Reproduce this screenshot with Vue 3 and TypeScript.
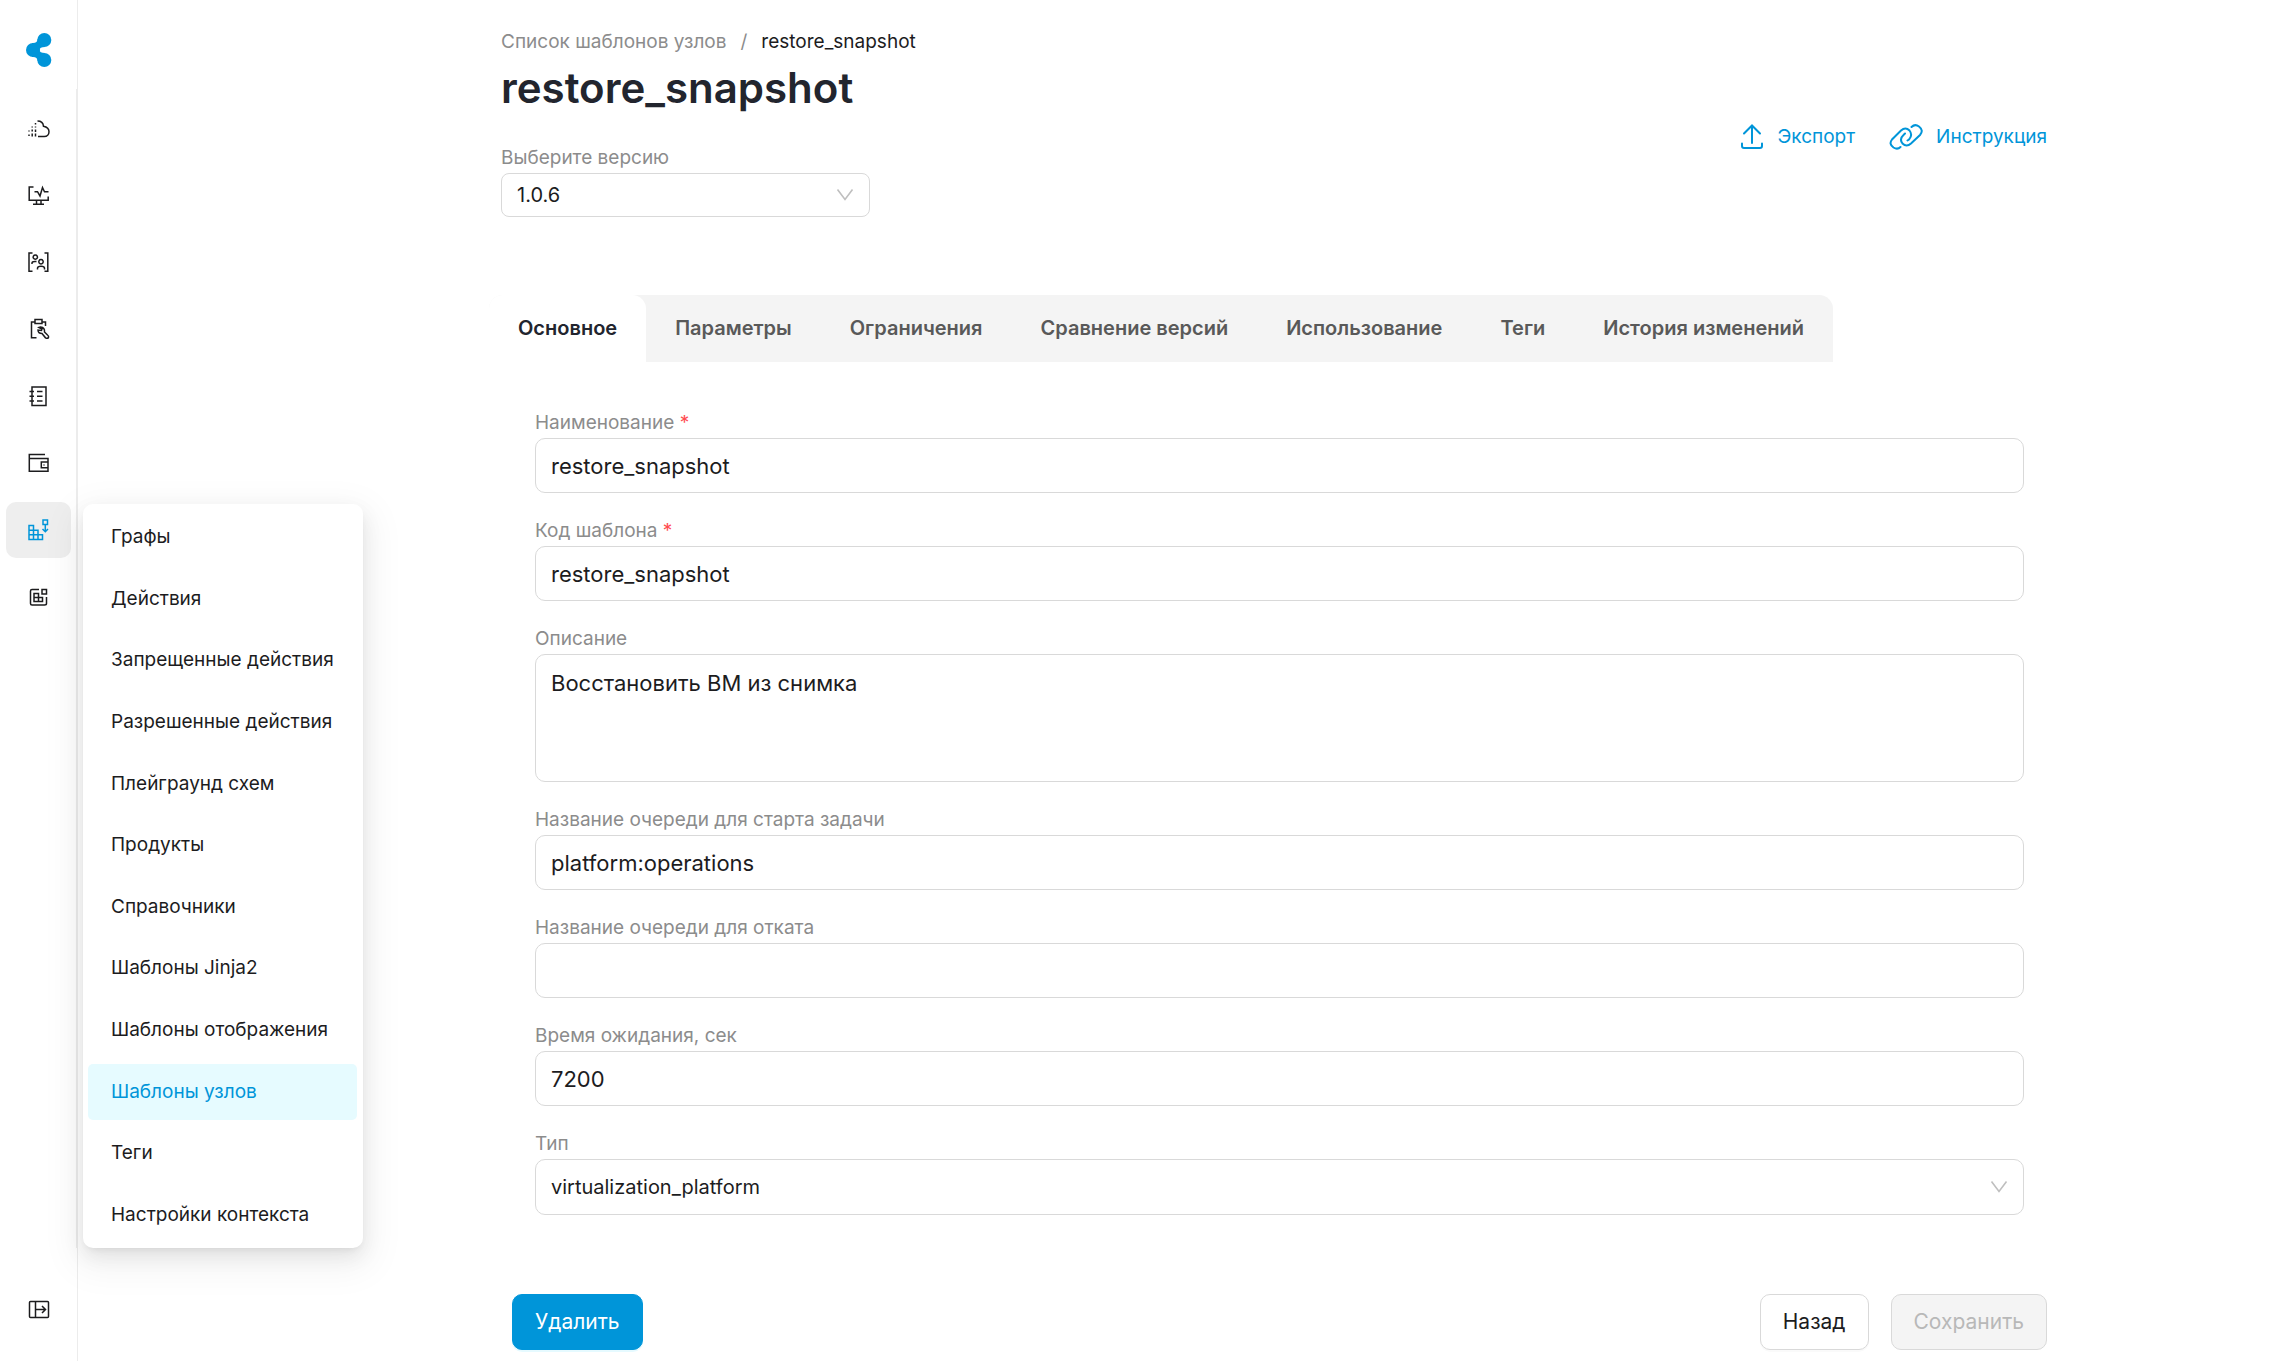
<script setup lang="ts">
import { ref } from 'vue'

interface NavItem {
  id: string
  title: string
  paths: string[]
}

const navItems: NavItem[] = [
  {
    id: 'cloud',
    title: 'Облако',
    paths: [
      'M10.5 5C14 5 16.2 7 16.5 10.3C20 11 22 13 22 15.8C22 18.6 20 20.5 17.3 20.5H11',
      'M8.5 7v1.5M8.5 10.5v1M8.5 13.5v2.5M8.5 17.5v3M5.2 10.5v1M5.2 13.5v2M5.2 17.5v3M2 14.5v1M2 18.5v1.5',
    ],
  },
  {
    id: 'monitoring',
    title: 'Мониторинг',
    paths: ['M6.5 4H2.2V17.2H21.2V13.5', 'M7.5 8.7H10.5L13 13L15.5 4.5L17.5 8.7H21.5', 'M9.5 17.5V21M14 17.5V21M6 21.2H17'],
  },
  {
    id: 'users',
    title: 'Пользователи',
    paths: [
      'M5.5 3H2V21.2H5.5M17.5 3H20.8V21.2H17.5',
      'M8.3 4.9a2.2 2.2 0 1 0 .01 0M5 14v-1q0-1.5 3-1.5h1.5',
      'M14 9.5a2.2 2.2 0 1 0 .01 0M10.5 19.5v-1.3q0-2 3.5-2t3.5 2v1.3',
    ],
  },
  {
    id: 'tasks',
    title: 'Задачи',
    paths: [
      'M9.5 20.8H4.5V5H8M15 5H18.5V9',
      'M8 2.5H15V6.5H8Z',
      'M12 10.5L15 12L14.5 13.5L11 13Q11 16.5 15 16.5L18.5 20.8Q20.5 22 21.5 20.5Q22 19 20.5 18L17.5 15Q18 10.5 13.5 10Z',
    ],
  },
  { id: 'journal', title: 'Журнал', paths: ['M5 3H19V21.5H5Z', 'M2.5 7.5H7M2.5 12.2H7M2.5 17H7M10 7.5H15.5M10 12.2H15.5M10 17H15.5'] },
  { id: 'wallet', title: 'Финансы', paths: ['M18 3.5H2.3V20.3H21V7.5H2.3', 'M21 11H14.3V16.8H21', 'M17 13.4V14.4'] },
  {
    id: 'designer',
    title: 'Конструктор',
    paths: ['M2 7.5H6.5V21.5H2ZM2 12.2H11V21.5M2 16.8H15.5V21.5H6.5', 'M16 2H20.5V6.5H16Z', 'M18.3 6.5V13.5M15.5 11L18.3 13.7L21 11'],
  },
  {
    id: 'blocks',
    title: 'Блоки',
    paths: ['M12 4.5H5Q3.5 4.5 3.5 6V18.5Q3.5 20 5 20H17.5Q19.5 20 19.5 18.5V12', 'M15 4.5H19.5V9H15Z', 'M7 8.5H11.5V16.5H7ZM7 12.5H15.5V16.5H11.5'],
  },
]

const activeNav = ref('designer')

const submenu: string[] = [
  'Графы',
  'Действия',
  'Запрещенные действия',
  'Разрешенные действия',
  'Плейграунд схем',
  'Продукты',
  'Справочники',
  'Шаблоны Jinja2',
  'Шаблоны отображения',
  'Шаблоны узлов',
  'Теги',
  'Настройки контекста',
]
const activeSubmenu = ref('Шаблоны узлов')

const tabs: string[] = ['Основное', 'Параметры', 'Ограничения', 'Сравнение версий', 'Использование', 'Теги', 'История изменений']
const activeTab = ref('Основное')

const version = ref('1.0.6')
const form = ref({
  name: 'restore_snapshot',
  code: 'restore_snapshot',
  description: 'Восстановить ВМ из снимка',
  startQueue: 'platform:operations',
  rollbackQueue: '',
  timeout: '7200',
  type: 'virtualization_platform',
})
</script>

<template>
  <div class="shell">
    <aside class="sidebar">
      <a class="logo" href="#" aria-label="На главную">
        <svg width="26" height="34" viewBox="0 0 26 34">
          <circle cx="18.3" cy="7" r="7" />
          <circle cx="7" cy="17" r="7" />
          <circle cx="18.3" cy="27" r="7" />
          <path d="M6 10Q11.5 10.5 11.5 6L19 14Q13.5 14 13.5 17Q13.5 20 19 20L11.5 28Q11.5 23.5 6 24Z" />
        </svg>
      </a>
      <nav class="nav">
        <div v-for="item in navItems" :key="item.id" class="nav-slot">
          <button
            type="button"
            class="nav-button"
            :class="{ active: item.id === activeNav }"
            :aria-label="item.title"
            @click="activeNav = item.id"
          >
            <svg class="icon" width="24" height="24" viewBox="0 0 24 24">
              <path v-for="d in item.paths" :key="d" :d="d" />
            </svg>
          </button>
          <div v-if="item.id === 'designer'" class="popup">
            <a
              v-for="entry in submenu"
              :key="entry"
              href="#"
              class="popup-item"
              :class="{ active: entry === activeSubmenu }"
              @click.prevent="activeSubmenu = entry"
            >{{ entry }}</a>
          </div>
        </div>
      </nav>
      <div class="sidebar-footer">
        <button type="button" class="nav-button" aria-label="Развернуть меню">
          <svg class="icon" width="24" height="24" viewBox="0 0 24 24">
            <path d="M3.5 4.5H20.5Q21.5 4.5 21.5 5.5V19.5Q21.5 20.5 20.5 20.5H3.5Q2.5 20.5 2.5 19.5V5.5Q2.5 4.5 3.5 4.5ZM8.5 4.5V20.5" />
            <path d="M8.5 12.5H18.5M15 9L18.5 12.5L15 16" />
          </svg>
        </button>
      </div>
    </aside>

    <main class="page">
      <header class="header">
        <div>
          <nav class="breadcrumb">
            <a href="#">Список шаблонов узлов</a>
            <span>/</span>
            <span class="current">restore_snapshot</span>
          </nav>
          <h1>restore_snapshot</h1>
          <div class="version">
            <label for="version">Выберите версию</label>
            <div class="select">
              <select id="version" v-model="version">
                <option>1.0.6</option>
              </select>
              <svg class="chevron" width="18" height="14" viewBox="0 0 18 14"><path d="M1.5 1.5L9 11.5L16.5 1.5" /></svg>
            </div>
          </div>
        </div>
        <div class="actions">
          <button type="button" class="link">
            <svg width="24" height="28" viewBox="0 0 24 28"><path d="M12 20V2.5M4 10.5L12 2.5L20 10.5M2 20.5V23Q2 25 4 25H20Q22 25 22 23V20.5" /></svg>
            Экспорт
          </button>
          <a class="link" href="#">
            <svg width="34" height="28" viewBox="0 0 34 28">
              <path d="M11.5 24Q8.5 27 4.5 24.5Q-.5 21 3 16.5L12 7.5Q16.5 3.5 20.5 7.5Q24 12 20 16.5L18.5 17.5" />
              <path d="M22.5 4Q26 .5 30 3.5Q35 7.5 31 12L22 20.5Q17.5 24.5 13.5 20.5Q10 16 14.5 12L16 10.5" />
            </svg>
            Инструкция
          </a>
        </div>
      </header>

      <div class="tabs" role="tablist">
        <button
          v-for="tab in tabs"
          :key="tab"
          type="button"
          role="tab"
          :aria-selected="tab === activeTab"
          :class="{ active: tab === activeTab }"
          @click="activeTab = tab"
        >{{ tab }}</button>
      </div>

      <form @submit.prevent>
        <div class="fields">
          <div class="field">
            <label for="name">Наименование <em>*</em></label>
            <input id="name" v-model="form.name" type="text" />
          </div>
          <div class="field">
            <label for="code">Код шаблона <em>*</em></label>
            <input id="code" v-model="form.code" type="text" />
          </div>
          <div class="field">
            <label for="description">Описание</label>
            <textarea id="description" v-model="form.description"></textarea>
          </div>
          <div class="field">
            <label for="start-queue">Название очереди для старта задачи</label>
            <input id="start-queue" v-model="form.startQueue" type="text" />
          </div>
          <div class="field">
            <label for="rollback-queue">Название очереди для отката</label>
            <input id="rollback-queue" v-model="form.rollbackQueue" type="text" />
          </div>
          <div class="field">
            <label for="timeout">Время ожидания, сек</label>
            <input id="timeout" v-model="form.timeout" type="text" inputmode="numeric" />
          </div>
          <div class="field">
            <label for="type">Тип</label>
            <div class="select large">
              <select id="type" v-model="form.type">
                <option>virtualization_platform</option>
              </select>
              <svg class="chevron" width="18" height="14" viewBox="0 0 18 14"><path d="M1.5 1.5L9 11.5L16.5 1.5" /></svg>
            </div>
          </div>
        </div>
        <div class="footer">
          <button type="button" class="btn primary">Удалить</button>
          <div class="footer-right">
            <button type="button" class="btn">Назад</button>
            <button type="submit" class="btn" disabled>Сохранить</button>
          </div>
        </div>
      </form>
    </main>
  </div>
</template>

<style>
body {
  margin: 0;
  background: #fff;
}
</style>

<style scoped>
* {
  box-sizing: border-box;
}
.shell {
  display: flex;
  min-height: 100vh;
  font-family: Inter, "Noto Sans", sans-serif;
  font-size: 19px;
  line-height: 30px;
  color: #1c1c1e;
}
button,
input,
select,
textarea {
  font: inherit;
  color: inherit;
  margin: 0;
}
button {
  cursor: pointer;
}
a {
  color: inherit;
  text-decoration: none;
}
svg {
  display: block;
  flex: none;
}

/* Sidebar */
.sidebar {
  position: sticky;
  top: 0;
  z-index: 1;
  flex: none;
  display: flex;
  flex-direction: column;
  width: 78px;
  height: 100vh;
  border-right: 1px solid #ececec;
}
.logo {
  display: flex;
  justify-content: center;
  padding: 33px 0 22px;
  fill: #0095d9;
}
.nav {
  flex: 1;
  display: flex;
  flex-direction: column;
  gap: 11px;
  padding: 11px 5px 0 6px;
  border-right: 1px solid #ececec;
}
.nav-slot {
  position: relative;
}
.nav-button {
  display: flex;
  align-items: center;
  justify-content: center;
  width: 65px;
  height: 56px;
  padding: 0;
  border: 0;
  border-radius: 10px;
  background: none;
}
.nav-button.active {
  background: #eee;
  color: #0095d9;
}
.icon {
  fill: none;
  stroke: currentColor;
  stroke-width: 1.5;
  overflow: visible;
}
.sidebar-footer {
  padding: 33px 6px 24px;
}
.popup {
  position: absolute;
  top: 2px;
  left: 77px;
  display: flex;
  flex-direction: column;
  justify-content: space-between;
  width: 280px;
  height: 744px;
  padding: 5px 6px 5px 5px;
  border-radius: 10px;
  background: #fff;
  box-shadow:
    0 8px 20px rgba(0, 0, 0, 0.08),
    0 4px 8px -5px rgba(0, 0, 0, 0.12),
    0 12px 36px 10px rgba(0, 0, 0, 0.05);
}
.popup-item {
  padding: 13px 23px;
  border-radius: 5px;
  white-space: nowrap;
}
.popup-item.active {
  background: #e6fbff;
  color: #0095d9;
}

/* Page header */
.page {
  flex: 1;
  min-width: 0;
  padding: 27px 249px 11px 423px;
}
.header {
  display: flex;
  justify-content: space-between;
  align-items: flex-end;
}
.breadcrumb {
  display: flex;
  gap: 14px;
  color: #8c8c8c;
}
.breadcrumb .current {
  color: #1c1c1e;
}
h1 {
  margin: 3px 0 27px;
  font-size: 42px;
  line-height: 56px;
  font-weight: 600;
  color: #22252e;
}
label {
  display: block;
  color: #8c8c8c;
}
label em {
  font-style: normal;
  color: #ff4d4f;
}
.version {
  width: 369px;
}
.actions {
  display: flex;
  gap: 34px;
  padding-bottom: 65px;
}
.link {
  display: flex;
  align-items: center;
  gap: 13px;
  padding: 0;
  border: 0;
  background: none;
  color: #0095d9;
}
.link svg {
  fill: none;
  stroke: currentColor;
  stroke-width: 2;
  stroke-linecap: round;
}

/* Tabs */
.tabs {
  display: flex;
  width: fit-content;
  margin: 78px 0 46px -12px;
  border-radius: 14px 14px 0 0;
  background: #f4f4f4;
}
.tabs button {
  padding: 18px 29px 19px;
  border: 0;
  background: none;
  font-size: 20px;
  font-weight: 600;
  color: #595959;
  white-space: nowrap;
}
.tabs button.active {
  border-radius: 14px 14px 0 0;
  background: #fff;
  color: #22252e;
}

/* Form */
.fields {
  display: flex;
  flex-direction: column;
  gap: 23px;
  padding: 0 23px 0 34px;
}
input,
textarea,
select {
  display: block;
  width: 100%;
  border: 1px solid #d9d9d9;
  border-radius: 10px;
  background: #fff;
  outline: 0;
}
input {
  height: 55px;
  padding: 0 15px;
  font-size: 22px;
}
textarea {
  height: 128px;
  padding: 13px 15px;
  font-size: 22px;
  resize: none;
}
.select {
  position: relative;
}
select {
  appearance: none;
  height: 44px;
  padding: 0 40px 0 15px;
  font-size: 20px;
  border-radius: 8px;
}
.select.large select {
  height: 56px;
  border-radius: 10px;
}
.chevron {
  position: absolute;
  top: calc(50% - 7px);
  right: 16px;
  fill: none;
  stroke: #bfbfbf;
  stroke-width: 1.6;
  pointer-events: none;
}
.footer {
  display: flex;
  justify-content: space-between;
  margin-top: 79px;
  padding-left: 11px;
}
.footer-right {
  display: flex;
  gap: 22px;
}
.btn {
  height: 56px;
  padding: 0 22px;
  border: 1px solid #d9d9d9;
  border-radius: 10px;
  background: #fff;
  font-size: 21px;
  box-shadow: 0 2px 0 rgba(0, 0, 0, 0.02);
}
.btn.primary {
  border-color: #0095d9;
  background: #0095d9;
  color: #fff;
  box-shadow: 0 2px 0 rgba(5, 205, 255, 0.1);
}
.btn:disabled {
  background: #f4f4f4;
  color: #b8b8b8;
  box-shadow: none;
  cursor: default;
}
</style>
